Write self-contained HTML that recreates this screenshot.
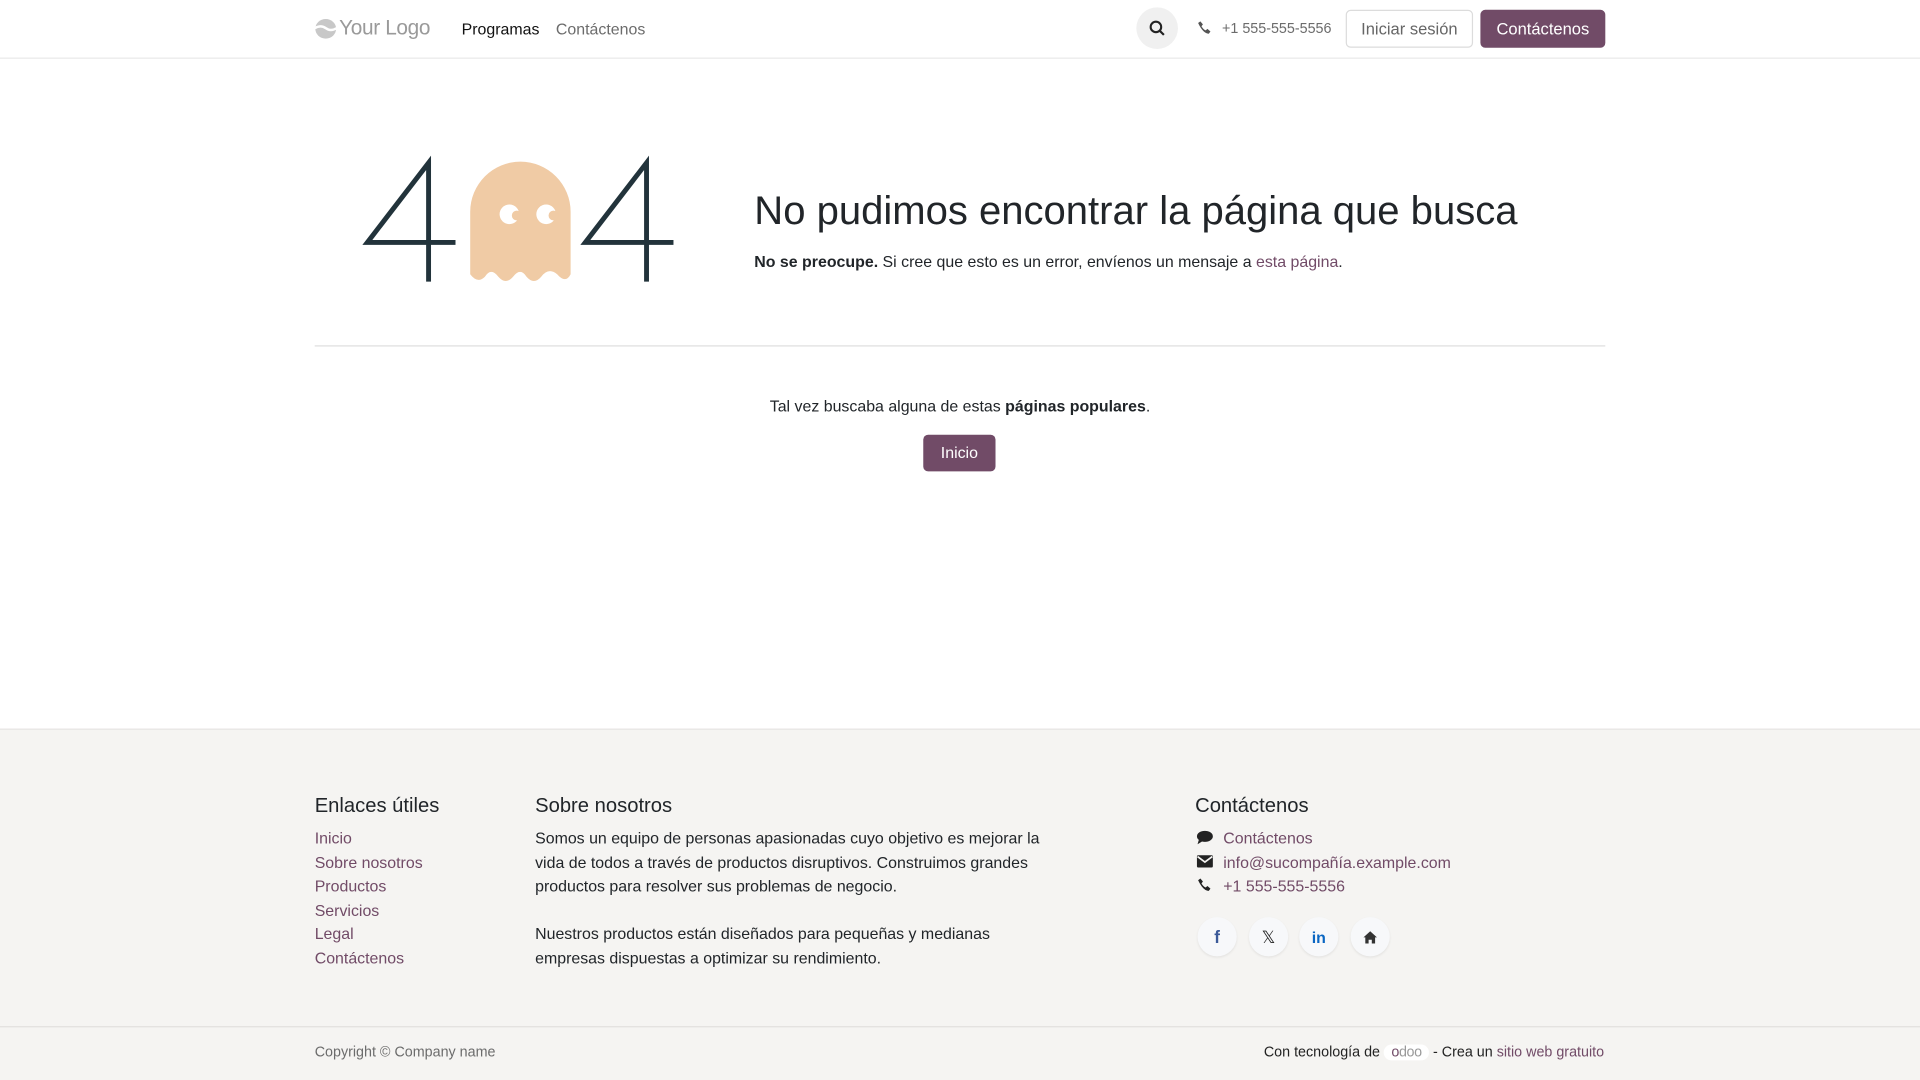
<!DOCTYPE html>
<html><head><meta charset="utf-8"><style>
html,body{margin:0;padding:0;width:1920px;height:1080px;overflow:hidden;background:#fff}
#w{width:1568px;height:882px;transform:scale(1.2244898);transform-origin:0 0;position:relative;font-family:"Liberation Sans",sans-serif;color:#212529;font-size:13px}
.a{position:absolute;white-space:nowrap}
.p{color:#714B67}
.circ{position:absolute;width:32px;height:32px;border-radius:50%;background:#f7f8fa;box-shadow:0 1px 2px rgba(0,0,0,.08);display:flex;align-items:center;justify-content:center}
</style></head><body><div id="w">
<div class="a" style="left:0;top:47px;width:1568px;border-top:1px solid #e9e9e9"></div>
<svg class="a" style="left:257px;top:15px" width="18" height="17" viewBox="0 0 18 17"><ellipse cx="9" cy="8.5" rx="8.5" ry="8" fill="#c8c8c8"/><path d="M0 8 Q5 5 9 8 Q13 11 18 8" stroke="#fff" stroke-width="2" fill="none"/></svg>
<div class="a" style="left:277px;top:13px;font-size:17px;color:#9a9a9a;letter-spacing:-0.3px">Your Logo</div>
<div class="a" style="left:377px;top:16px;font-size:13px;color:#111">Programas</div>
<div class="a" style="left:454px;top:16px;font-size:13px;color:#6c6c6c">Contáctenos</div>
<div class="a" style="left:928px;top:6px;width:34px;height:34px;border-radius:50%;background:#f0f0f0"></div>
<svg class="a" style="left:938px;top:16px" width="14" height="14" viewBox="0 0 14 14"><circle cx="6" cy="6" r="4.3" stroke="#222" stroke-width="1.7" fill="none"/><path d="M9.2 9.2 L12.5 12.5" stroke="#222" stroke-width="1.8"/></svg>
<svg class="a" style="left:978px;top:17px" width="11" height="11" viewBox="0 0 12 12"><path d="M2.5 0.5 L4.8 3.2 L3.5 4.8 Q5 7.5 7.2 8.5 L8.8 7.2 L11.5 9.5 L10 11.5 Q5 11.5 0.5 2 Z" fill="#555"/></svg>
<div class="a" style="left:998px;top:17px;font-size:11.7px;color:#6c6c6c">+1 555-555-5556</div>
<div class="a" style="left:1099px;top:8px;width:102px;height:29px;border:1px solid #dcdcdc;border-radius:4px;color:#666;font-size:13.5px;text-align:center;line-height:29px">Iniciar sesión</div>
<div class="a" style="left:1209px;top:8px;width:102px;height:31px;background:#714B67;border-radius:4px;color:#fff;font-size:13.5px;text-align:center;line-height:31px">Contáctenos</div>
<svg class="a" style="left:290px;top:125px" width="270" height="110" viewBox="290 125 270 110">
<g stroke="#22333b" stroke-width="4" fill="none"><path d="M350 230 V133 L300 198 H372"/><path d="M528 230 V133 L478 198 H550"/></g>
<path d="M384 173 A41 41 0 0 1 466 173 V224 Q462 232 455 224 Q448 218 442 226 Q436 233 430 226 Q425 218 419 226 Q413 233 407 226 Q401 218 396 226 Q390 232 384 224 Z" fill="#f0cba5"/>
<circle cx="416" cy="175" r="8" fill="#fff"/><circle cx="422" cy="176" r="4" fill="#f0cba5"/>
<circle cx="446" cy="175" r="8" fill="#fff"/><circle cx="452" cy="176" r="4" fill="#f0cba5"/>
</svg>
<div class="a" style="left:616px;top:153px;font-size:32.7px;color:#212529">No pudimos encontrar la página que busca</div>
<div class="a" style="left:616px;top:206px;font-size:13px"><b>No se preocupe.</b> Si cree que esto es un error, envíenos un mensaje a <span class="p">esta página</span>.</div>
<div class="a" style="left:257px;top:282px;width:1054px;border-top:1px solid #dedede"></div>
<div class="a" style="left:0;width:1568px;text-align:center;top:324px;font-size:13px">Tal vez buscaba alguna de estas <b>páginas populares</b>.</div>
<div class="a" style="left:754px;top:355px;width:59px;height:30px;background:#714B67;border-radius:4px;color:#fff;text-align:center;line-height:30px;font-size:13px">Inicio</div>
<div class="a" style="left:0;top:595px;width:1568px;height:287px;background:#f5f4f2;border-top:1px solid #e6e4e2"></div>
<div class="a" style="left:0;top:838px;width:1568px;border-top:1px solid #e2e0de"></div>
<div class="a" style="left:257px;top:649px;font-size:16.5px">Enlaces útiles</div>
<div class="a p" style="left:257px;top:675px;line-height:19.5px;font-size:13px">Inicio<br>Sobre nosotros<br>Productos<br>Servicios<br>Legal<br>Contáctenos</div>
<div class="a" style="left:437px;top:649px;font-size:16.5px">Sobre nosotros</div>
<div class="a" style="left:437px;top:675px;line-height:19.5px;font-size:13px">Somos un equipo de personas apasionadas cuyo objetivo es mejorar la<br>vida de todos a través de productos disruptivos. Construimos grandes<br>productos para resolver sus problemas de negocio.<br><br>Nuestros productos están diseñados para pequeñas y medianas<br>empresas dispuestas a optimizar su rendimiento.</div>
<div class="a" style="left:976px;top:649px;font-size:16.5px">Contáctenos</div>
<svg class="a" style="left:977px;top:678px" width="14" height="12" viewBox="0 0 14 12"><ellipse cx="7" cy="5" rx="6.5" ry="4.5" fill="#222"/><path d="M2 8 L1 11.5 L5 9 Z" fill="#222"/></svg>
<svg class="a" style="left:977px;top:698px" width="14" height="11" viewBox="0 0 14 11"><rect x="0.5" y="0.5" width="13" height="10" rx="1" fill="#222"/><path d="M1 1.5 L7 6 L13 1.5" stroke="#f5f4f2" stroke-width="1.4" fill="none"/></svg>
<svg class="a" style="left:978px;top:717px" width="11" height="11" viewBox="0 0 12 12"><path d="M2.5 0.5 L4.8 3.2 L3.5 4.8 Q5 7.5 7.2 8.5 L8.8 7.2 L11.5 9.5 L10 11.5 Q5 11.5 0.5 2 Z" fill="#222"/></svg>
<div class="a p" style="left:999px;top:675px;line-height:19.5px;font-size:13px">Contáctenos<br>info@sucompañía.example.com<br>+1 555-555-5556</div>
<div class="circ" style="left:978px;top:749px"><span style="color:#3b5998;font-weight:bold;font-size:14px">f</span></div>
<div class="circ" style="left:1020px;top:749px"><span style="color:#222;font-size:14px">𝕏</span></div>
<div class="circ" style="left:1061px;top:749px"><span style="color:#0a66c2;font-weight:bold;font-size:13px">in</span></div>
<div class="circ" style="left:1103px;top:749px"><svg width="12" height="11" viewBox="0 0 12 11"><path d="M6 0.5 L11.5 5.5 H10 V10.5 H7.3 V7.5 H4.7 V10.5 H2 V5.5 H0.5 Z" fill="#333"/></svg></div>
<div class="a" style="left:257px;top:853px;font-size:11.7px;color:#6c6c6c">Copyright © Company name</div>
<div class="a" style="right:258px;top:853px;font-size:11.7px;color:#222">Con tecnología de <span style="display:inline-block;background:#fff;border-radius:8px;padding:0 6px;color:#999;letter-spacing:-0.3px"><span style="color:#714B67">o</span>doo</span> - Crea un <span class="p">sitio web gratuito</span></div>
</div></body></html>
